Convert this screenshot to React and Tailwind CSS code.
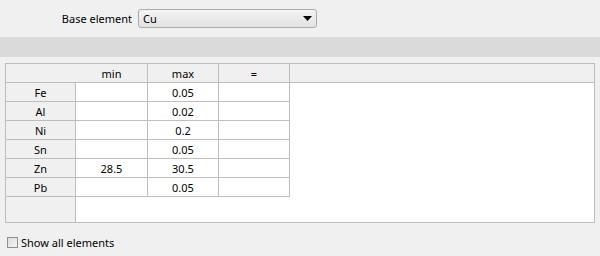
import React from "react";

const rows = [
  ["Fe", "", "0.05", ""],
  ["Al", "", "0.02", ""],
  ["Ni", "", "0.2", ""],
  ["Sn", "", "0.05", ""],
  ["Zn", "28.5", "30.5", ""],
  ["Pb", "", "0.05", ""],
];

export default function App() {
  return (
    <div
      className="w-[600px] h-[256px] bg-[#f0f0f0] text-[11px] text-black overflow-hidden"
      style={{ fontFamily: '"Noto Sans", "Open Sans", sans-serif' }}
    >
      {/* top bar */}
      <div className="h-[37px] flex items-start pt-[9px]">
        <div className="w-[132px] h-[19px] flex items-center justify-end leading-none">
          Base element
        </div>
        <div className="ml-[6px] w-[179px] h-[19px] border border-[#acacac] rounded-[3px] bg-gradient-to-b from-[#f4f4f4] to-[#e2e2e2] flex items-center pl-[4px] pr-[3px] leading-none">
          <span className="flex-1">Cu</span>
          <svg width="9" height="5" viewBox="0 0 9 5" className="mr-[1px]">
            <polygon points="0,0 9,0 4.5,5" fill="#000" />
          </svg>
        </div>
      </div>

      {/* gray band */}
      <div className="h-[20px] bg-[#dadada]" />

      {/* table */}
      <div className="mt-[6px] ml-[5px] w-[590px] h-[160px] border border-[#bdbdbd] flex flex-col bg-white">
        <div className="h-[19px] shrink-0 flex bg-[#f0f0f0] border-b border-[#bdbdbd] leading-none">
          <div className="w-[70px]" />
          <div className="w-[72px] border-r border-[#bdbdbd] flex items-center justify-center">min</div>
          <div className="w-[71px] border-r border-[#bdbdbd] flex items-center justify-center">max</div>
          <div className="w-[71px] border-r border-[#bdbdbd] flex items-center justify-center">=</div>
        </div>
        <div className="flex flex-1">
          <div className="w-[70px] bg-[#f0f0f0] border-r border-[#bdbdbd] flex flex-col">
            {rows.map((r) => (
              <div
                key={r[0]}
                className="h-[19px] border-b border-[#bdbdbd] flex items-center justify-center leading-none"
              >
                {r[0]}
              </div>
            ))}
          </div>
          <div className="flex flex-col">
            {rows.map((r) => (
              <div key={r[0]} className="flex h-[19px] leading-none">
                <div className="w-[72px] border-r border-b border-[#bdbdbd] flex items-center justify-center">{r[1]}</div>
                <div className="w-[71px] border-r border-b border-[#bdbdbd] flex items-center justify-center">{r[2]}</div>
                <div className="w-[71px] border-r border-b border-[#bdbdbd] flex items-center justify-center">{r[3]}</div>
              </div>
            ))}
          </div>
        </div>
      </div>

      {/* checkbox */}
      <div className="mt-[14px] ml-[7px] flex items-center">
        <div className="w-[11px] h-[11px] border border-[#8e8f8f] bg-gradient-to-br from-[#dcdcdc] to-[#f6f6f6]" />
        <span className="ml-[3px] leading-none">Show all elements</span>
      </div>
    </div>
  );
}
